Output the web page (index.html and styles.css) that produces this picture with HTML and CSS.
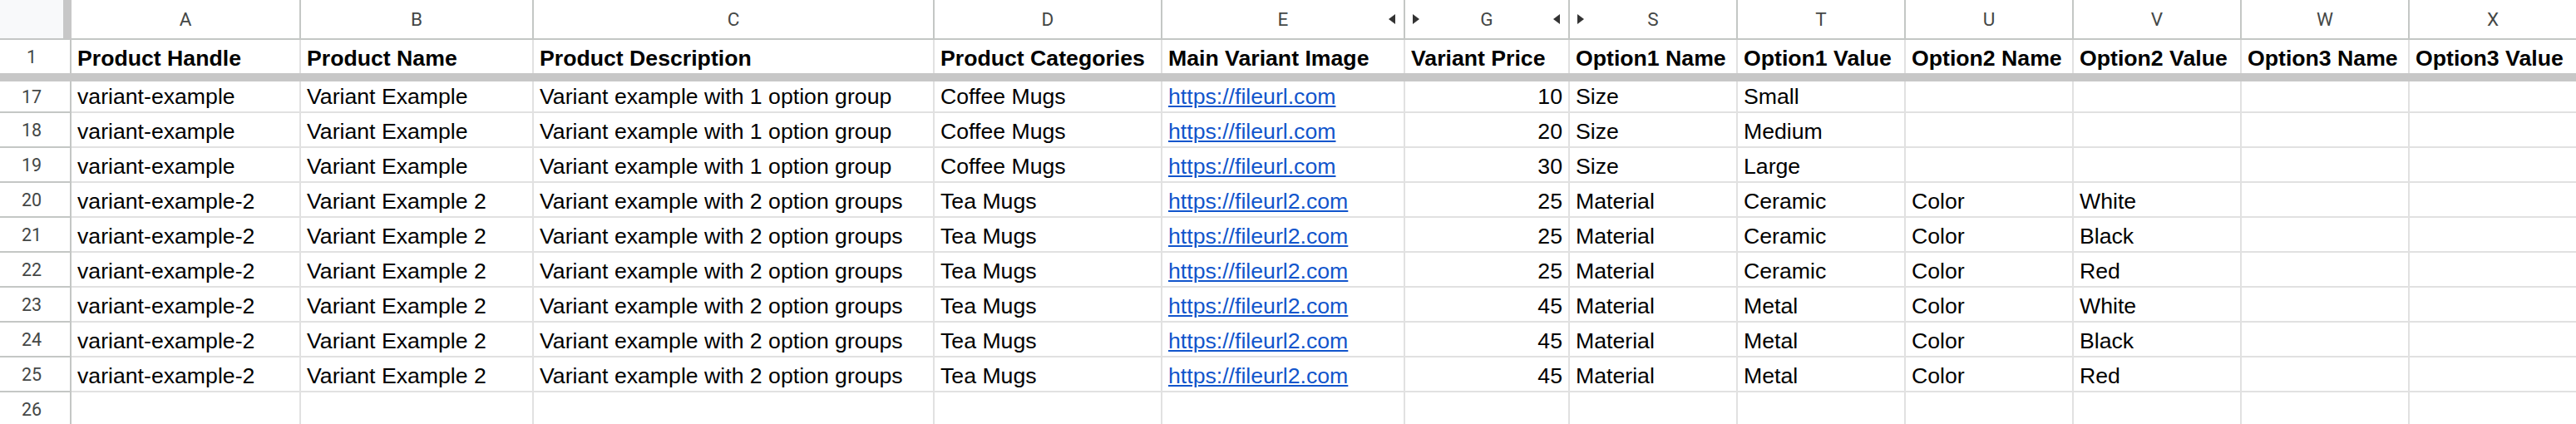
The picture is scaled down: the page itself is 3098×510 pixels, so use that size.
FILE: index.html
```html
<!DOCTYPE html>
<html>
<head>
<meta charset="utf-8">
<link rel="stylesheet" href="styles.css">
</head>
<body>
<div class="sheet">
  <div class="ch corner"></div>
  <div class="ch">A</div>
  <div class="ch">B</div>
  <div class="ch">C</div>
  <div class="ch">D</div>
  <div class="ch">E<span class="tri left end"></span></div>
  <div class="ch"><span class="tri right start"></span>G<span class="tri left end"></span></div>
  <div class="ch"><span class="tri right start"></span>S</div>
  <div class="ch">T</div>
  <div class="ch">U</div>
  <div class="ch">V</div>
  <div class="ch">W</div>
  <div class="ch">X</div>

  <div class="rh r1">1</div>
  <div class="c b r1">Product Handle</div>
  <div class="c b r1">Product Name</div>
  <div class="c b r1">Product Description</div>
  <div class="c b r1">Product Categories</div>
  <div class="c b r1">Main Variant Image</div>
  <div class="c b r1">Variant Price</div>
  <div class="c b r1">Option1 Name</div>
  <div class="c b r1">Option1 Value</div>
  <div class="c b r1">Option2 Name</div>
  <div class="c b r1">Option2 Value</div>
  <div class="c b r1">Option3 Name</div>
  <div class="c b r1">Option3 Value</div>

  <div class="freeze"></div>

  <div class="rh r17">17</div>
  <div class="c r17">variant-example</div>
  <div class="c r17">Variant Example</div>
  <div class="c r17">Variant example with 1 option group</div>
  <div class="c r17">Coffee Mugs</div>
  <div class="c r17"><a class="link">https://fileurl.com</a></div>
  <div class="c num r17">10</div>
  <div class="c r17">Size</div>
  <div class="c r17">Small</div>
  <div class="c r17"></div>
  <div class="c r17"></div>
  <div class="c r17"></div>
  <div class="c r17"></div>

  <div class="rh">18</div>
  <div class="c">variant-example</div>
  <div class="c">Variant Example</div>
  <div class="c">Variant example with 1 option group</div>
  <div class="c">Coffee Mugs</div>
  <div class="c"><a class="link">https://fileurl.com</a></div>
  <div class="c num">20</div>
  <div class="c">Size</div>
  <div class="c">Medium</div>
  <div class="c"></div>
  <div class="c"></div>
  <div class="c"></div>
  <div class="c"></div>

  <div class="rh">19</div>
  <div class="c">variant-example</div>
  <div class="c">Variant Example</div>
  <div class="c">Variant example with 1 option group</div>
  <div class="c">Coffee Mugs</div>
  <div class="c"><a class="link">https://fileurl.com</a></div>
  <div class="c num">30</div>
  <div class="c">Size</div>
  <div class="c">Large</div>
  <div class="c"></div>
  <div class="c"></div>
  <div class="c"></div>
  <div class="c"></div>

  <div class="rh">20</div>
  <div class="c">variant-example-2</div>
  <div class="c">Variant Example 2</div>
  <div class="c">Variant example with 2 option groups</div>
  <div class="c">Tea Mugs</div>
  <div class="c"><a class="link">https://fileurl2.com</a></div>
  <div class="c num">25</div>
  <div class="c">Material</div>
  <div class="c">Ceramic</div>
  <div class="c">Color</div>
  <div class="c">White</div>
  <div class="c"></div>
  <div class="c"></div>

  <div class="rh">21</div>
  <div class="c">variant-example-2</div>
  <div class="c">Variant Example 2</div>
  <div class="c">Variant example with 2 option groups</div>
  <div class="c">Tea Mugs</div>
  <div class="c"><a class="link">https://fileurl2.com</a></div>
  <div class="c num">25</div>
  <div class="c">Material</div>
  <div class="c">Ceramic</div>
  <div class="c">Color</div>
  <div class="c">Black</div>
  <div class="c"></div>
  <div class="c"></div>

  <div class="rh">22</div>
  <div class="c">variant-example-2</div>
  <div class="c">Variant Example 2</div>
  <div class="c">Variant example with 2 option groups</div>
  <div class="c">Tea Mugs</div>
  <div class="c"><a class="link">https://fileurl2.com</a></div>
  <div class="c num">25</div>
  <div class="c">Material</div>
  <div class="c">Ceramic</div>
  <div class="c">Color</div>
  <div class="c">Red</div>
  <div class="c"></div>
  <div class="c"></div>

  <div class="rh">23</div>
  <div class="c">variant-example-2</div>
  <div class="c">Variant Example 2</div>
  <div class="c">Variant example with 2 option groups</div>
  <div class="c">Tea Mugs</div>
  <div class="c"><a class="link">https://fileurl2.com</a></div>
  <div class="c num">45</div>
  <div class="c">Material</div>
  <div class="c">Metal</div>
  <div class="c">Color</div>
  <div class="c">White</div>
  <div class="c"></div>
  <div class="c"></div>

  <div class="rh">24</div>
  <div class="c">variant-example-2</div>
  <div class="c">Variant Example 2</div>
  <div class="c">Variant example with 2 option groups</div>
  <div class="c">Tea Mugs</div>
  <div class="c"><a class="link">https://fileurl2.com</a></div>
  <div class="c num">45</div>
  <div class="c">Material</div>
  <div class="c">Metal</div>
  <div class="c">Color</div>
  <div class="c">Black</div>
  <div class="c"></div>
  <div class="c"></div>

  <div class="rh">25</div>
  <div class="c">variant-example-2</div>
  <div class="c">Variant Example 2</div>
  <div class="c">Variant example with 2 option groups</div>
  <div class="c">Tea Mugs</div>
  <div class="c"><a class="link">https://fileurl2.com</a></div>
  <div class="c num">45</div>
  <div class="c">Material</div>
  <div class="c">Metal</div>
  <div class="c">Color</div>
  <div class="c">Red</div>
  <div class="c"></div>
  <div class="c"></div>

  <div class="rh">26</div>
  <div class="c"></div>
  <div class="c"></div>
  <div class="c"></div>
  <div class="c"></div>
  <div class="c"></div>
  <div class="c"></div>
  <div class="c"></div>
  <div class="c"></div>
  <div class="c"></div>
  <div class="c"></div>
  <div class="c"></div>
  <div class="c"></div>
</div>
</body>
</html>
```
FILE: styles.css
```css
html, body {
  margin: 0;
  padding: 0;
  background: #ffffff;
  overflow: hidden;
  width: 3098px;
  height: 510px;
}

.sheet {
  display: grid;
  grid-template-columns: 86px 276px 280px 482px 274px 292px 198px 202px 202px 202px 202px 202px 202px;
  grid-template-rows: 48px 40px 10px 38px repeat(9, 42px);
  width: 3100px;
  font-family: "Liberation Sans", Arial, sans-serif;
  font-size: 26.67px;
  color: #000000;
}

.ch {
  position: relative;
  box-sizing: border-box;
  border-right: 2px solid #c4c7c5;
  border-bottom: 2px solid #c4c7c5;
  display: flex;
  align-items: center;
  justify-content: center;
  font-family: Roboto, "Liberation Sans", sans-serif;
  font-size: 22.5px;
  color: #444746;
  background: #ffffff;
  padding-bottom: 1px;
}

.corner {
  background: #f8f9fa;
  border-right: 10px solid #c7c7c7;
}

.tri {
  position: absolute;
  top: 17px;
  width: 0;
  height: 0;
  border-top: 6px solid transparent;
  border-bottom: 6px solid transparent;
}

.tri.left {
  border-right: 8px solid #333333;
}

.tri.right {
  border-left: 8px solid #333333;
}

.tri.end {
  right: 10px;
}

.tri.start {
  left: 9px;
}

.rh {
  box-sizing: border-box;
  border-right: 2px solid #c4c7c5;
  border-bottom: 2px solid #c4c7c5;
  display: flex;
  align-items: center;
  justify-content: center;
  padding-right: 8px;
  font-family: Roboto, "Liberation Sans", sans-serif;
  font-size: 21.5px;
  color: #444746;
  background: #ffffff;
}

.c {
  box-sizing: border-box;
  border-right: 2px solid #e1e1e1;
  border-bottom: 2px solid #e1e1e1;
  display: flex;
  align-items: flex-end;
  padding: 0 6px 2px 7px;
  line-height: 31px;
  white-space: nowrap;
  overflow: hidden;
}

.r1 {
  border-bottom: none;
}

.b {
  font-weight: bold;
}

.num {
  justify-content: flex-end;
  padding-right: 7px;
}

.link {
  color: #1155cc;
  text-decoration: underline;
  text-underline-offset: 2px;
}

.freeze {
  grid-column: 1 / -1;
  background: #c7c7c7;
}
```
